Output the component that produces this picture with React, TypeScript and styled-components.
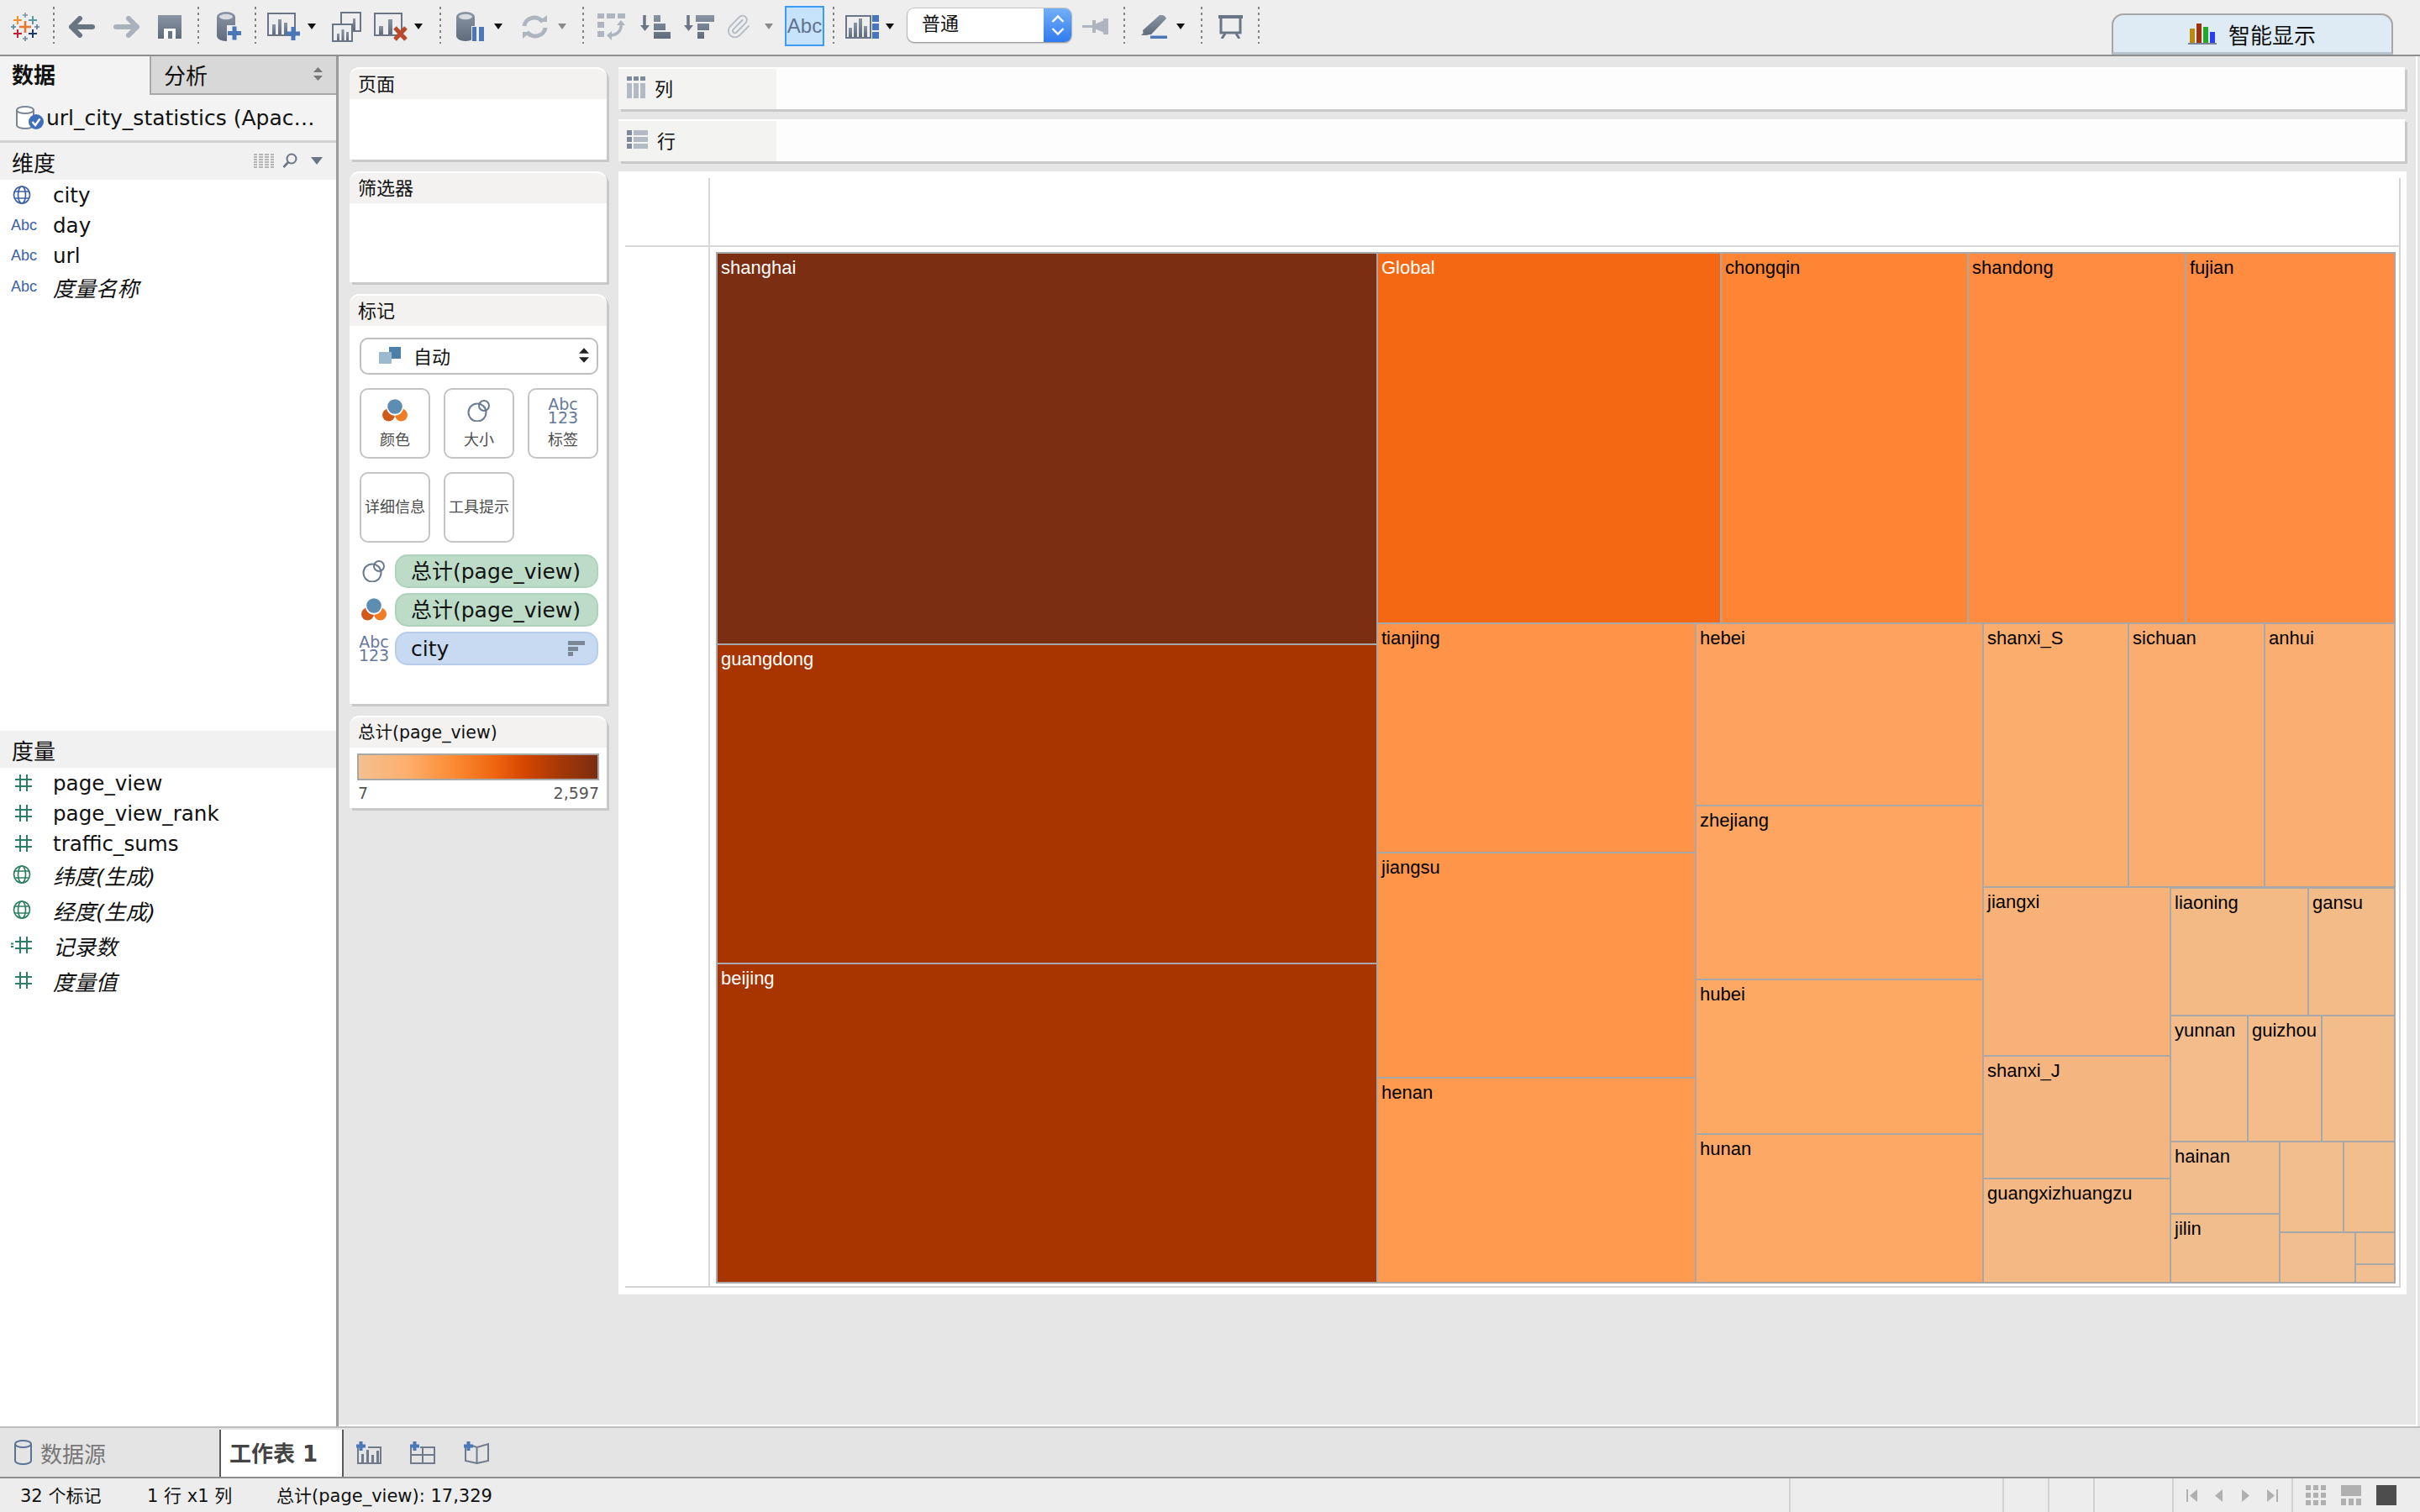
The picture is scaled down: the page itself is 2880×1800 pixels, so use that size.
import React from "react";
import styled, { createGlobalStyle } from "styled-components";
import { Paperclip } from "lucide-react";

const UI = `"DejaVu Sans", "Noto Sans CJK SC", sans-serif`;
const GRAD = "url(#toolGrad)";
const BLUE = "#4a77b8";
const LIGHT = "#aeb5be";
const SLATE = "#6a7686";

const Global = createGlobalStyle`
  html, body { margin: 0; padding: 0; width: 2880px; height: 1800px; overflow: hidden; background: #e6e6e6; }
  * { box-sizing: border-box; }
`;

const Page = styled.div`
  width: 2880px; height: 1800px; display: flex; flex-direction: column;
  font-family: ${UI}; color: #111;
`;
const HiddenSvg = styled.svg`position: absolute; width: 0; height: 0;`;

/* ---------- toolbar ---------- */
const Toolbar = styled.header`
  height: 67px; flex: none; display: flex; align-items: center; padding: 0 0 2px 13px;
  background: #eeeeee; border-bottom: 2px solid #8e8e8e;
`;
const Tool = styled.div<{ $ml?: number }>`
  flex: none; display: flex; align-items: center; justify-content: center; margin-left: ${p => p.$ml ?? 0}px;
`;
const Sep = styled.div<{ $ml: number }>`
  flex: none; align-self: flex-start; margin-top: 8px; margin-left: ${p => p.$ml}px;
  height: 44px; width: 2px;
  background: repeating-linear-gradient(180deg, #858585 0 3px, transparent 3px 7px);
`;
const Caret = styled.div<{ $ml: number; $dim?: boolean }>`
  flex: none; margin-left: ${p => p.$ml}px; width: 0; height: 0;
  border-left: 5.5px solid transparent; border-right: 5.5px solid transparent;
  border-top: 7px solid ${p => (p.$dim ? "#8a8a8a" : "#111")};
`;
const AbcToggle = styled.div`
  flex: none; margin-left: 14px; width: 47px; height: 48px; margin-top: -1px;
  display: flex; align-items: center; justify-content: center;
  background: #c7e3fb; border: 2px solid #3d9af5;
  font: 24px "Liberation Sans", sans-serif; color: #5f7390;
`;
const FitSelect = styled.div`
  flex: none; margin-left: 16px; width: 195px; height: 40px; margin-top: -3px; display: flex; overflow: hidden;
  background: #fff; border-radius: 8px; box-shadow: 0 1px 2px #8a8a8a, 0 0 0 1px #c8c8c8;
  font-size: 22px; line-height: 38px;
`;
const FitValue = styled.div`flex: 1; padding-left: 17px;`;
const Stepper = styled.div`
  width: 33px; display: flex; align-items: center; justify-content: center;
  background: linear-gradient(#74aff6, #2f7bef);
`;
const SmartTab = styled.div`
  margin-left: auto; margin-right: 32px; align-self: flex-end; margin-bottom: -2px;
  width: 335px; height: 49px; display: flex; align-items: center; gap: 14px; padding-left: 89px;
  background: #dfebf4; border: 2.5px solid #a6a6a6; border-bottom: 3px solid #b8c2ca;
  border-radius: 14px 14px 0 0; font-size: 26px;
`;

/* ---------- left pane ---------- */
const Main = styled.div`flex: 1; min-height: 0; display: flex;`;
const LeftPane = styled.aside`
  width: 403px; flex: none; background: #fff; border-right: 3px solid #9a9a9a; display: flex; flex-direction: column;
`;
const PaneTabs = styled.div`height: 46px; flex: none; display: flex; background: #f3f3f3;`;
const DataTab = styled.div`
  width: 178px; padding: 0 0 0 14px; font-size: 26px; font-weight: 700; line-height: 46px;
`;
const AnalysisTab = styled.div`
  flex: 1; display: flex; align-items: center; justify-content: space-between; padding: 0 16px 2px 15px;
  background: #d8d8d8; border-left: 2px solid #a8a8a8; border-bottom: 2px solid #a8a8a8; font-size: 26px;
`;
const Source = styled.div`
  height: 57px; flex: none; display: flex; align-items: center; gap: 3px; padding: 0 0 0 19px;
  background: #f3f3f3; border-bottom: 3px solid #d2d2d2; font-size: 25px; white-space: nowrap;
`;
const SectionHead = styled.div`
  height: 44px; flex: none; display: flex; align-items: center; justify-content: space-between; padding: 1px 16px 0 14px;
  background: #f1f1f1; font-size: 26px;
`;
const HeadIcons = styled.div`display: flex; align-items: center; gap: 10px; margin-top: -3px;`;
const HeadCaret = styled.div`
  width: 0; height: 0; margin-left: 6px;
  border-left: 7px solid transparent; border-right: 7px solid transparent; border-top: 9px solid #6a7686;
`;
const Section = styled.section<{ $h?: number }>`
  ${p => (p.$h ? `height: ${p.$h}px; flex: none;` : "flex: 1;")} display: flex; flex-direction: column;
`;
const Field = styled.div<{ $h: number; $it?: boolean }>`
  height: ${p => p.$h}px; flex: none; display: flex; align-items: center; white-space: nowrap;
  font-size: ${p => (p.$it ? 25.5 : 24.6)}px;
  font-style: ${p => (p.$it ? "italic" : "normal")};
`;
const FieldIcon = styled.div`
  width: 63px; flex: none; padding-left: 13px; display: flex; align-items: center;
`;
const AbcMark = styled.span`
  font: 18px "Liberation Sans", sans-serif; color: #3d62a4;
`;

/* ---------- cards column ---------- */
const Work = styled.main`
  flex: 1; min-width: 0; display: flex; gap: 14px; padding: 13px 0 0 13px; position: relative;
  border-right: 2px solid #fff; margin-right: 3px; border-bottom: 2px solid #fff;
`;
const CardsCol = styled.div`width: 306px; flex: none; display: flex; flex-direction: column;`;
const Card = styled.section<{ $h: number; $mb: number }>`
  height: ${p => p.$h}px; margin-bottom: ${p => p.$mb}px; flex: none; background: #fff;
  border-radius: 12px 12px 0 0; box-shadow: 3px 3px 0 #c9c9c9; display: flex; flex-direction: column;
`;
const CardHead = styled.div<{ $small?: boolean }>`
  height: 38px; flex: none; padding: 3px 0 0 10px; background: #f3f2f1; border-radius: 12px 12px 0 0;
  border-top: 2px solid #fff; font-size: ${p => (p.$small ? 20.5 : 22)}px; line-height: 31px;
`;
const MarkBody = styled.div`
  flex: 1; display: flex; flex-direction: column; padding: 14px 10px 0 12px;
`;
const TypeSelect = styled.div`
  height: 44px; flex: none; display: flex; align-items: center; padding: 0 9px 2px 21px; gap: 15px;
  border: 2px solid #bfbfbf; border-radius: 10px; font-size: 22px; margin-bottom: 16px;
`;
const UpDown = styled.div`margin-left: auto; display: flex; align-items: center;`;
const MarkGrid = styled.div`display: grid; grid-template-columns: repeat(3, 84px); grid-auto-rows: 84px; column-gap: 16px; row-gap: 16px;`;
const MarkBtn = styled.div`
  border: 2px solid #c4c4c4; border-radius: 10px; background: #fff; color: #4d4d4d;
  display: flex; flex-direction: column; align-items: center; justify-content: center; font-size: 18px; line-height: 24px;
`;
const MarkIconBox = styled.div`height: 34px; display: flex; align-items: center; justify-content: center; margin-bottom: 6px;`;
const Abc123 = styled.div`
  font: 19px/16px "DejaVu Sans", sans-serif; color: #67799a; text-align: center;
`;
const Pills = styled.div`display: flex; flex-direction: column; gap: 6px; margin-top: 14px;`;
const PillRow = styled.div`display: flex; align-items: center; height: 40px;`;
const PillIcon = styled.div`width: 34px; margin-right: 8px; flex: none; display: flex; justify-content: center;`;
const Pill = styled.div<{ $blue?: boolean }>`
  flex: 1; height: 40px; border-radius: 15px; padding: 0 14px ${p => (p.$blue ? 0 : 4)}px 17px; display: flex; align-items: center; justify-content: space-between;
  font-size: 25px; background: ${p => (p.$blue ? "#c8d9f2" : "#bcdcc8")};
  border: 2px solid ${p => (p.$blue ? "#b8cdec" : "#aed2bb")};
`;
const LegendBar = styled.div`
  height: 32px; margin: 7px 9px 0 9px; border: 2.5px solid #a8a8a8;
  background: linear-gradient(90deg, #f2c08f 0%, #feaf6e 20%, #fb8a33 40%, #ef6510 57%, #d24500 70%, #a03708 86%, #7b2d11 100%);
`;
const LegendScale = styled.div`
  display: flex; justify-content: space-between; padding: 3px 9px 0 10px; font-size: 19px; line-height: 24px; color: #555;
`;

/* ---------- shelves + view ---------- */
const RightCol = styled.div`width: 2128px; flex: none; display: flex; flex-direction: column;`;
const Shelf = styled.div<{ $mb: number }>`
  height: 50px; flex: none; margin-right: 2px; margin-bottom: ${p => p.$mb}px; display: flex; background: #fdfdfd;
  box-shadow: 3px 3px 0 #c9c9c9; border-top: 2px solid #fff;
`;
const ShelfLabel = styled.div`
  width: 188px; flex: none; display: flex; align-items: center; gap: 11px; padding: 0 0 5px 10px;
  background: #f3f3f2; font-size: 22px;
`;
const View = styled.section`
  height: 1337px; flex: none; background: #fff; padding: 8px 7px 8px 8px;
`;
const ViewGrid = styled.div`
  height: 100%; display: grid; grid-template-columns: 99px 1fr; grid-template-rows: 82px 1fr;
  border-right: 2px solid #d4d4d4; border-bottom: 2px solid #d4d4d4;
`;
const Corner = styled.div`border-bottom: 2px solid #d8d8d8;`;
const TopAxis = styled.div`border-left: 2px solid #d8d8d8; border-bottom: 2px solid #d8d8d8;`;
const SideAxis = styled.div``;
const Plot = styled.div`border-left: 2px solid #d8d8d8; padding: 5px 0 0 6px;`;
const TreeSvg = styled.svg`display: block;`;
const CellLabel = styled.text<{ $light?: boolean }>`
  font: 22px "Liberation Sans", sans-serif; fill: ${p => (p.$light ? "#fff" : "#000")};
`;

/* ---------- bottom ---------- */
const SheetBar = styled.div`
  height: 62px; flex: none; display: flex; background: #e4e4e4;
  border-top: 2px solid #bdbdbd; border-bottom: 2px solid #8e8e8e; padding-top: 2px;
`;
const SourceTab = styled.div`
  width: 261px; display: flex; align-items: center; gap: 10px; padding: 0 0 2px 17px; font-size: 26px; color: #777;
`;
const SheetTab = styled.div`
  width: 148px; display: flex; align-items: center; padding: 0 0 4px 10px; background: #fff; font-size: 26px; font-weight: 700;
  color: #444; border-left: 2px solid #5a5a5a; border-right: 2px solid #5a5a5a; white-space: nowrap;
`;
const AddIcons = styled.div`display: flex; align-items: center; padding: 0 0 2px 15px; gap: 34px;`;
const StatusBar = styled.footer`
  height: 40px; flex: none; display: flex; align-items: center; background: #ededed; font-size: 21px; white-space: nowrap;
`;
const StatusItem = styled.div<{ $w: number; $pl?: number }>`
  width: ${p => p.$w}px; padding: 0 0 3px ${p => p.$pl ?? 0}px; flex: none;
`;
const StatusCell = styled.div<{ $w: number; $gap?: number }>`
  width: ${p => p.$w}px; height: 100%; flex: none; border-left: 2px solid #d2d2d2;
  display: flex; align-items: center; padding-left: 15px; gap: ${p => p.$gap ?? 0}px;
`;

/* ---------- icons ---------- */
const Bars = ({ x, w, hs, base, gap = 3, fill = GRAD }: { x: number; w: number; hs: number[]; base: number; gap?: number; fill?: string }) => (
  <>{hs.map((h, i) => <rect key={i} x={x + i * (w + gap)} y={base - h} width={w} height={h} fill={fill} />)}</>
);
const Plus = ({ cx, cy, r, w }: { cx: number; cy: number; r: number; w: number }) => (
  <path d={`M${cx - r} ${cy}H${cx + r}M${cx} ${cy - r}V${cy + r}`} stroke={BLUE} strokeWidth={w} />
);
const Cyl = () => (
  <>
    <path d="M0 6A11 6 0 0 1 22 6V29A11 6 0 0 1 0 29Z" fill={GRAD} />
    <ellipse cx="11" cy="6" rx="8" ry="3.2" fill="#d8dbe0" />
  </>
);
const Logo = () => {
  const c = (x: number, y: number, r: number, col: string, w: number) => (
    <path d={`M${x - r} ${y}H${x + r}M${x} ${y - r}V${y + r}`} stroke={col} strokeWidth={w} fill="none" />
  );
  return (
    <svg width="34" height="34" viewBox="0 0 34 34">
      {c(17, 17, 7, "#e8762c", 2.6)}
      {c(8, 9, 5, "#f28e2b", 2)}{c(26, 9, 5, "#5b9aa0", 2)}
      {c(8, 25, 5, "#c72035", 2)}{c(26, 25, 5, "#1f3a6e", 2)}
      {c(17, 3, 3, "#7a99ac", 1.6)}{c(17, 31, 3, "#6d87a0", 1.6)}
      {c(3, 17, 3, "#59879b", 1.6)}{c(31, 17, 3, "#5b7f9e", 1.6)}
    </svg>
  );
};
const Arrow = ({ flip, color }: { flip?: boolean; color: string }) => (
  <svg width="31" height="26" viewBox="0 0 31 26">
    <path d={flip ? "M18 3L28 13L18 23M28 13H3" : "M13 3L3 13L13 23M3 13H28"} fill="none" stroke={color} strokeWidth="6" strokeLinecap="round" strokeLinejoin="round" />
  </svg>
);
const Save = () => (
  <svg width="28" height="28" viewBox="0 0 28 28">
    <path d="M0 0H28V28H0Z" fill={GRAD} />
    <path d="M7 16H21V28H7Z" fill="#fff" /><path d="M12 19H17V28H12Z" fill={SLATE} />
  </svg>
);
const DbAdd = () => (
  <svg width="29" height="35" viewBox="0 0 29 35">
    <Cyl />
    <path d="M12 16H29V35H12Z" fill="#eee" />
    <path d="M0 16H12V29L0 29Z" fill="none" />
    <Plus cx={21} cy={25.5} r={8} w={5} />
  </svg>
);
const NewSheet = () => (
  <svg width="41" height="34" viewBox="0 0 41 34">
    <rect x="1" y="1" width="32" height="26" fill="none" stroke={SLATE} strokeWidth="2" />
    <Bars x={6} w={4} hs={[12, 18, 14]} base={26} gap={3} />
    <Plus cx={31} cy={25} r={8} w={5} />
  </svg>
);
const Duplicate = () => (
  <svg width="35" height="36" viewBox="0 0 35 36">
    <rect x="11" y="1" width="23" height="22" fill="none" stroke={SLATE} strokeWidth="2" />
    <Bars x={17} w={3} hs={[8, 14]} base={22} gap={5} />
    <rect x="1" y="15" width="23" height="20" fill="#eee" stroke={SLATE} strokeWidth="2" />
    <Bars x={6} w={3} hs={[8, 13, 10]} base={34} gap={2.5} />
  </svg>
);
const ClearSheet = () => (
  <svg width="40" height="34" viewBox="0 0 40 34">
    <rect x="1" y="1" width="32" height="26" fill="none" stroke={SLATE} strokeWidth="2" />
    <Bars x={6} w={5} hs={[10, 18]} base={26} gap={6} />
    <path d="M25 18L38 32M38 18L25 32" stroke="#b8492a" strokeWidth="5" />
  </svg>
);
const Pause = () => (
  <svg width="34" height="35" viewBox="0 0 34 35">
    <Cyl /><path d="M18 17H34V35H18Z" fill="#eee" />
    <path d="M19 18H24V35H19ZM27 18H33V35H27Z" fill={BLUE} />
  </svg>
);
const Refresh = () => (
  <svg width="31" height="28" viewBox="0 0 31 28" fill="none" stroke={LIGHT} strokeWidth="5">
    <path d="M3 13A12 11 0 0 1 25 8" /><path d="M28 15A12 11 0 0 1 6 20" />
    <path d="M20 8H30V0Z M11 20H1V28Z" fill={LIGHT} stroke="none" />
  </svg>
);
const Swap = () => (
  <svg width="33" height="32" viewBox="0 0 33 32">
    <path d="M0 0H8V6H0ZM11 0H21V6H11ZM24 0H33V6H24ZM0 10H8V17H0ZM0 21H8V28H0Z" fill={LIGHT} />
    <path d="M28 12C29 20 24 26 15 26" fill="none" stroke={LIGHT} strokeWidth="3.5" />
    <path d="M23 14L28 8L33 14ZM17 21V32L11 26Z" fill={LIGHT} />
  </svg>
);
const Sort = ({ desc }: { desc?: boolean }) => (
  <svg width="36" height="28" viewBox="0 0 36 28">
    <path d="M5 0V14" stroke={SLATE} strokeWidth="3.5" /><path d="M0 12H11L5.5 19Z" fill={SLATE} />
    {desc ? (
      <path d="M14 0H36V8H14ZM16 10H30V18H16ZM16 20H24V28H16Z" fill={GRAD} />
    ) : (
      <path d="M16 0H24V8H16ZM16 10H30V18H16ZM16 20H36V28H16Z" fill={GRAD} />
    )}
  </svg>
);
const FitChart = () => (
  <svg width="40" height="28" viewBox="0 0 40 28">
    <rect x="1" y="1" width="29" height="26" fill="none" stroke={SLATE} strokeWidth="2" />
    <Bars x={4} w={4} hs={[11, 17, 22, 13]} base={26} gap={2} />
    <path d="M32 0H40V8H32ZM32 10H40V18H32ZM32 20H40V28H32Z" fill={BLUE} />
  </svg>
);
const Chevrons = () => (
  <svg width="16" height="26" viewBox="0 0 16 26" fill="none" stroke="#fff" strokeWidth="2.4">
    <path d="M1.5 9L8 2.5L14.5 9M1.5 17L8 23.5L14.5 17" />
  </svg>
);
const Pin = () => (
  <svg width="31" height="19" viewBox="0 0 31 19" fill={LIGHT}>
    <path d="M0 8H12L31 0V19L12 11H0Z" /><path d="M12 2H16V17H12Z" /><path d="M25 0H31V19H25Z" />
  </svg>
);
const Pen = () => (
  <svg width="31" height="28" viewBox="0 0 31 28">
    <path d="M22 1Q28 0 30 5L12 24L3 25L2 19Z" fill={GRAD} transform="translate(0 -1)" />
    <path d="M0 24L4 20L8 24H0Z" fill={SLATE} />
    <path d="M11 24.5H31V28H11Z" fill={BLUE} />
  </svg>
);
const Present = () => (
  <svg width="29" height="28" viewBox="0 0 29 28" fill="none" stroke={SLATE}>
    <path d="M0 2H29" strokeWidth="4" /><path d="M3 3V21H26V3" strokeWidth="3" />
    <path d="M8 22L4 28M21 22L25 28" strokeWidth="3" />
  </svg>
);
const SmartBars = () => (
  <svg width="34" height="25" viewBox="0 0 34 25">
    <rect x="2" y="6" width="6" height="17" fill="#b98a0b" /><rect x="10" y="0" width="6" height="23" fill="#9e330b" />
    <rect x="18" y="4" width="6" height="19" fill="#24a72a" /><rect x="26" y="10" width="6" height="13" fill="#2c3df0" />
    <rect x="0" y="23" width="34" height="2" fill="#7a8494" />
  </svg>
);
const DbCheck = () => (
  <svg width="33" height="29" viewBox="0 0 33 29">
    <path d="M1 5A10 4 0 0 1 21 5V23A10 4 0 0 1 1 23Z" fill="#fff" stroke="#7b8694" strokeWidth="2" />
    <path d="M1 5A10 4 0 0 0 21 5" fill="none" stroke="#7b8694" strokeWidth="2" />
    <circle cx="24" cy="19" r="9" fill="#3f6fb8" />
    <path d="M19.5 19L23 23L28.5 15.5" fill="none" stroke="#fff" strokeWidth="2.4" />
  </svg>
);
const UpDownArrows = ({ color, w = 11, h = 16 }: { color: string; w?: number; h?: number }) => (
  <svg width={w} height={h} viewBox="0 0 11 16" fill={color}>
    <path d="M0 6L5.5 0L11 6Z M0 10L5.5 16L11 10Z" />
  </svg>
);
const Globe = ({ color }: { color: string }) => (
  <svg width="26" height="22" viewBox="-3 0 26 22" fill="none" stroke={color} strokeWidth="1.7">
    <ellipse cx="10" cy="11" rx="9.5" ry="10" /><ellipse cx="10" cy="11" rx="4.5" ry="10" />
    <path d="M1 7H19M1 15H19" />
  </svg>
);
const Hash = ({ eq }: { eq?: boolean }) => (
  <svg width="28" height="20" viewBox="0 0 28 20" fill="none" stroke="#2f7f63" strokeWidth="2">
    <path d="M11 0V20M19 0V20M5 6H25M5 14H25" />
    {eq && <path d="M-1 8.5H3M-1 12H3" />}
  </svg>
);
const SheetsList = () => (
  <svg width="24" height="17" viewBox="0 0 24 17" fill="#b5b5b5">
    {[0, 3, 6, 9, 12, 15].map(y => (
      <React.Fragment key={y}>
        <rect x="0" y={y} width="4" height="2" /><rect x="6" y={y} width="5" height="2" />
        <rect x="13" y={y} width="5" height="2" /><rect x="20" y={y} width="4" height="2" />
      </React.Fragment>
    ))}
  </svg>
);
const Search = () => (
  <svg width="18" height="18" viewBox="0 0 18 18" fill="none" stroke="#6a7686" strokeWidth="2">
    <circle cx="11" cy="7" r="5.5" /><path d="M7 11L1.5 17" strokeWidth="2.6" />
  </svg>
);
const AutoIcon = () => (
  <svg width="26" height="20" viewBox="0 0 26 20">
    <rect x="12" y="0" width="14" height="14" fill="#4d80a8" /><rect x="0" y="6" width="15" height="14" fill="#9cb9cf" />
  </svg>
);
const ColorDots = () => (
  <svg width="30" height="28" viewBox="0 0 30 28">
    <circle cx="7.5" cy="19" r="7.5" fill="#cf5a1c" /><circle cx="22.5" cy="19" r="7.5" fill="#f07d25" />
    <circle cx="15" cy="10" r="10" fill="#fff" /><circle cx="15" cy="9" r="8.8" fill="#5e8db2" />
  </svg>
);
const SizeRings = () => (
  <svg width="28" height="26" viewBox="0 0 28 26" fill="none" stroke="#6a7a90" strokeWidth="2">
    <circle cx="12" cy="15" r="10.5" /><circle cx="20" cy="7" r="6" />
  </svg>
);
const SortBars = () => (
  <svg width="20" height="18" viewBox="0 0 20 18" fill="#7a8797">
    <rect x="0" y="0" width="20" height="5" /><rect x="0" y="7" width="12" height="5" /><rect x="0" y="13" width="6" height="5" />
  </svg>
);
const ColsIcon = () => (
  <svg width="22" height="26" viewBox="0 0 22 26">
    <path d="M0 0H6V5H0ZM8 0H14V5H8ZM16 0H22V5H16Z" fill="#7e8a9a" />
    <path d="M0 8H6V26H0ZM8 8H14V26H8ZM16 8H22V26H16Z" fill="#b3bac3" />
  </svg>
);
const RowsIcon = () => (
  <svg width="25" height="22" viewBox="0 0 25 22">
    <path d="M0 0H6V6H0ZM0 8H6V14H0ZM0 16H6V22H0Z" fill="#7e8a9a" />
    <path d="M8 0H25V6H8ZM8 8H25V14H8ZM8 16H25V22H8Z" fill="#b3bac3" />
  </svg>
);
const Can = () => (
  <svg width="21" height="30" viewBox="0 0 21 30" fill="none" stroke="#5a7396" strokeWidth="2">
    <path d="M1 5A9.5 4 0 0 1 20 5V25A9.5 4 0 0 1 1 25Z" /><path d="M1 5A9.5 4 0 0 0 20 5" />
  </svg>
);
const AddChart = () => (
  <svg width="30" height="27" viewBox="0 0 30 27">
    <path d="M2 7V26H29V7H14" fill="none" stroke="#6f7b8b" strokeWidth="2" />
    <Bars x={6} w={3} hs={[10, 15, 9, 14]} base={25} gap={3} fill="#6f7b8b" />
    <path d="M0 5.5H11M5.5 0V11" stroke={BLUE} strokeWidth="4" />
  </svg>
);
const AddDash = () => (
  <svg width="30" height="27" viewBox="0 0 30 27">
    <path d="M1 7V26H29V7H12M15 7V26M1 16H29" fill="none" stroke="#6f7b8b" strokeWidth="2" />
    <path d="M0 5.5H11M5.5 0V11" stroke={BLUE} strokeWidth="4" />
  </svg>
);
const AddStory = () => (
  <svg width="31" height="27" viewBox="0 0 31 27">
    <path d="M2 6V23L15.5 26L29 23V3L15.5 7V26M10 5L15.5 7" fill="none" stroke="#6f7b8b" strokeWidth="2" />
    <path d="M0 5.5H11M5.5 0V11" stroke={BLUE} strokeWidth="4" />
  </svg>
);
const NavIcon = ({ d }: { d: string }) => (
  <svg width="13" height="15" viewBox="0 0 13 15" fill="#b0b0b0"><path d={d} /></svg>
);
const GridMode = () => (
  <svg width="24" height="24" viewBox="0 0 24 24" fill="#b0b0b0">
    {[0, 9, 18].flatMap(y => [0, 9, 18].map(x => <rect key={`${x}${y}`} x={x} y={y} width="6" height="6" />))}
  </svg>
);
const SplitMode = () => (
  <svg width="24" height="24" viewBox="0 0 24 24" fill="#b0b0b0">
    <rect x="0" y="0" width="24" height="13" />
    <rect x="0" y="16" width="6" height="8" /><rect x="9" y="16" width="6" height="8" /><rect x="18" y="16" width="6" height="8" />
  </svg>
);
const FullMode = () => (
  <svg width="24" height="24" viewBox="0 0 24 24"><rect width="24" height="24" fill="#4d4d4d" /></svg>
);

/* ---------- treemap data (page coordinates) ---------- */
type C = [string, number, number, number, number, string, boolean?];
const cells: C[] = [
  ["shanghai", 853, 301, 1639, 767, "#7c2e12", true],
  ["guangdong", 853, 767, 1639, 1147, "#a83500", true],
  ["beijing", 853, 1147, 1639, 1527, "#a83500", true],
  ["Global", 1639, 301, 2048, 742, "#f46713", true],
  ["chongqin", 2048, 301, 2342, 742, "#fe8534"],
  ["shandong", 2342, 301, 2601, 742, "#ff8c40"],
  ["fujian", 2601, 301, 2850, 742, "#ff8c40"],
  ["tianjing", 1639, 742, 2018, 1015, "#ff9448"],
  ["jiangsu", 1639, 1015, 2018, 1283, "#ff9549"],
  ["henan", 1639, 1283, 2018, 1527, "#ff9a4f"],
  ["hebei", 2018, 742, 2360, 959, "#fda35f"],
  ["zhejiang", 2018, 959, 2360, 1166, "#fda561"],
  ["hubei", 2018, 1166, 2360, 1350, "#fda863"],
  ["hunan", 2018, 1350, 2360, 1527, "#fda864"],
  ["shanxi_S", 2360, 742, 2533, 1056, "#fbad6e"],
  ["sichuan", 2533, 742, 2695, 1056, "#fbad70"],
  ["anhui", 2695, 742, 2850, 1056, "#fbae72"],
  ["jiangxi", 2360, 1056, 2583, 1257, "#f8b277"],
  ["shanxi_J", 2360, 1257, 2583, 1403, "#f5b580"],
  ["guangxizhuangzu", 2360, 1403, 2583, 1527, "#f4b884"],
  ["liaoning", 2583, 1057, 2747, 1209, "#f4ba85"],
  ["gansu", 2747, 1057, 2850, 1209, "#f3bb88"],
  ["yunnan", 2583, 1209, 2675, 1359, "#f3bc8a"],
  ["guizhou", 2675, 1209, 2763, 1359, "#f3bc8a"],
  ["", 2763, 1209, 2850, 1359, "#f2bc8b"],
  ["hainan", 2583, 1359, 2713, 1445, "#f2bd8c"],
  ["jilin", 2583, 1445, 2713, 1527, "#f2bd8c"],
  ["", 2713, 1359, 2789, 1467, "#f2be8d"],
  ["", 2789, 1359, 2850, 1467, "#f2be8d"],
  ["", 2713, 1467, 2803, 1527, "#f1bf8f"],
  ["", 2803, 1467, 2850, 1505, "#f1bf8f"],
  ["", 2803, 1505, 2850, 1527, "#f1bf90"],
];

const Abc123Mark = () => <Abc123>Abc<br />123</Abc123>;

export default function App() {
  return (
    <Page>
      <Global />
      <HiddenSvg>
        <defs>
          <linearGradient id="toolGrad" x1="0" y1="0" x2="0" y2="1">
            <stop offset="0" stopColor="#8a95a3" /><stop offset="1" stopColor="#5f6b7c" />
          </linearGradient>
        </defs>
      </HiddenSvg>

      <Toolbar>
        <Tool><Logo /></Tool>
        <Sep $ml={16} />
        <Tool $ml={17}><Arrow color="#6a7584" /></Tool>
        <Tool $ml={22}><Arrow flip color="#a9b1bb" /></Tool>
        <Tool $ml={22}><Save /></Tool>
        <Sep $ml={19} />
        <Tool $ml={21}><DbAdd /></Tool>
        <Sep $ml={16} />
        <Tool $ml={13}><NewSheet /></Tool>
        <Caret $ml={7} />
        <Tool $ml={19}><Duplicate /></Tool>
        <Tool $ml={15}><ClearSheet /></Tool>
        <Caret $ml={8} />
        <Sep $ml={20} />
        <Tool $ml={18}><Pause /></Tool>
        <Caret $ml={11} />
        <Tool $ml={23}><Refresh /></Tool>
        <Caret $ml={12} $dim />
        <Sep $ml={19} />
        <Tool $ml={16}><Swap /></Tool>
        <Tool $ml={18}><Sort /></Tool>
        <Tool $ml={16}><Sort desc /></Tool>
        <Tool $ml={13}><Paperclip size={31} color="#b3bac3" strokeWidth={1.4} /></Tool>
        <Caret $ml={16} $dim />
        <AbcToggle>Abc</AbcToggle>
        <Sep $ml={10} />
        <Tool $ml={13}><FitChart /></Tool>
        <Caret $ml={8} />
        <FitSelect>
          <FitValue>普通</FitValue>
          <Stepper><Chevrons /></Stepper>
        </FitSelect>
        <Tool $ml={13}><Pin /></Tool>
        <Sep $ml={18} />
        <Tool $ml={19}><Pen /></Tool>
        <Caret $ml={11} />
        <Sep $ml={19} />
        <Tool $ml={19}><Present /></Tool>
        <Sep $ml={18} />
        <SmartTab><SmartBars />智能显示</SmartTab>
      </Toolbar>

      <Main>
        <LeftPane>
          <PaneTabs>
            <DataTab>数据</DataTab>
            <AnalysisTab>分析<UpDownArrows color="#777" /></AnalysisTab>
          </PaneTabs>
          <Source><DbCheck />url_city_statistics (Apac…</Source>
          <Section $h={700}>
            <SectionHead>
              维度
              <HeadIcons>
                <SheetsList /><Search />
                <HeadCaret />
              </HeadIcons>
            </SectionHead>
            <Field $h={36}><FieldIcon><Globe color="#3d62a4" /></FieldIcon>city</Field>
            <Field $h={36}><FieldIcon><AbcMark>Abc</AbcMark></FieldIcon>day</Field>
            <Field $h={36}><FieldIcon><AbcMark>Abc</AbcMark></FieldIcon>url</Field>
            <Field $h={38} $it><FieldIcon><AbcMark>Abc</AbcMark></FieldIcon>度量名称</Field>
          </Section>
          <Section>
            <SectionHead>度量</SectionHead>
            <Field $h={36}><FieldIcon><Hash /></FieldIcon>page_view</Field>
            <Field $h={36}><FieldIcon><Hash /></FieldIcon>page_view_rank</Field>
            <Field $h={36}><FieldIcon><Hash /></FieldIcon>traffic_sums</Field>
            <Field $h={38} $it><FieldIcon><Globe color="#2f7f63" /></FieldIcon>纬度(生成)</Field>
            <Field $h={46} $it><FieldIcon><Globe color="#2f7f63" /></FieldIcon>经度(生成)</Field>
            <Field $h={38} $it><FieldIcon><Hash eq /></FieldIcon>记录数</Field>
            <Field $h={46} $it><FieldIcon><Hash /></FieldIcon>度量值</Field>
          </Section>
        </LeftPane>

        <Work>
          <CardsCol>
            <Card $h={110} $mb={14}><CardHead>页面</CardHead></Card>
            <Card $h={132} $mb={14}><CardHead>筛选器</CardHead></Card>
            <Card $h={488} $mb={14}>
              <CardHead>标记</CardHead>
              <MarkBody>
                <TypeSelect><AutoIcon />自动<UpDown><UpDownArrows color="#222" w={12} h={20} /></UpDown></TypeSelect>
                <MarkGrid>
                  <MarkBtn><MarkIconBox><ColorDots /></MarkIconBox>颜色</MarkBtn>
                  <MarkBtn><MarkIconBox><SizeRings /></MarkIconBox>大小</MarkBtn>
                  <MarkBtn><MarkIconBox><Abc123Mark /></MarkIconBox>标签</MarkBtn>
                  <MarkBtn>详细信息</MarkBtn>
                  <MarkBtn>工具提示</MarkBtn>
                </MarkGrid>
                <Pills>
                  <PillRow><PillIcon><SizeRings /></PillIcon><Pill>总计(page_view)</Pill></PillRow>
                  <PillRow><PillIcon><ColorDots /></PillIcon><Pill>总计(page_view)</Pill></PillRow>
                  <PillRow><PillIcon><Abc123Mark /></PillIcon><Pill $blue>city<SortBars /></Pill></PillRow>
                </Pills>
              </MarkBody>
            </Card>
            <Card $h={110} $mb={0}>
              <CardHead $small>总计(page_view)</CardHead>
              <LegendBar />
              <LegendScale><span>7</span><span>2,597</span></LegendScale>
            </Card>
          </CardsCol>

          <RightCol>
            <Shelf $mb={12}><ShelfLabel><ColsIcon />列</ShelfLabel></Shelf>
            <Shelf $mb={12}><ShelfLabel><RowsIcon />行</ShelfLabel></Shelf>
            <View>
              <ViewGrid>
                <Corner /><TopAxis /><SideAxis />
                <Plot>
                  <TreeSvg width="2000" height="1229" viewBox="851 299 2000 1229">
                    {cells.map(([name, x0, y0, x1, y1, fill, light], i) => (
                      <g key={i}>
                        <rect x={x0} y={y0} width={x1 - x0} height={y1 - y0} fill={fill} stroke="#a8a8a8" strokeWidth="2" />
                        {name && <CellLabel x={x0 + 5} y={y0 + 25} $light={light}>{name}</CellLabel>}
                      </g>
                    ))}
                  </TreeSvg>
                </Plot>
              </ViewGrid>
            </View>
          </RightCol>
        </Work>
      </Main>

      <SheetBar>
        <SourceTab><Can />数据源</SourceTab>
        <SheetTab>工作表 1</SheetTab>
        <AddIcons><AddChart /><AddDash /><AddStory /></AddIcons>
      </SheetBar>
      <StatusBar>
        <StatusItem $w={175} $pl={24}>32 个标记</StatusItem>
        <StatusItem $w={154}>1 行 x1 列</StatusItem>
        <StatusItem $w={1800}>总计(page_view): 17,329</StatusItem>
        <StatusCell $w={254} />
        <StatusCell $w={54} />
        <StatusCell $w={54} />
        <StatusCell $w={94} />
        <StatusCell $w={142} $gap={19}>
          <NavIcon d="M0 0H2V15H0ZM13 0V15L4 7.5Z" />
          <NavIcon d="M11 0V15L2 7.5Z" />
          <NavIcon d="M2 0V15L11 7.5Z" />
          <NavIcon d="M0 0V15L9 7.5ZM11 0H13V15H11Z" />
        </StatusCell>
        <StatusCell $w={153} $gap={18}><GridMode /><SplitMode /><FullMode /></StatusCell>
      </StatusBar>
    </Page>
  );
}
